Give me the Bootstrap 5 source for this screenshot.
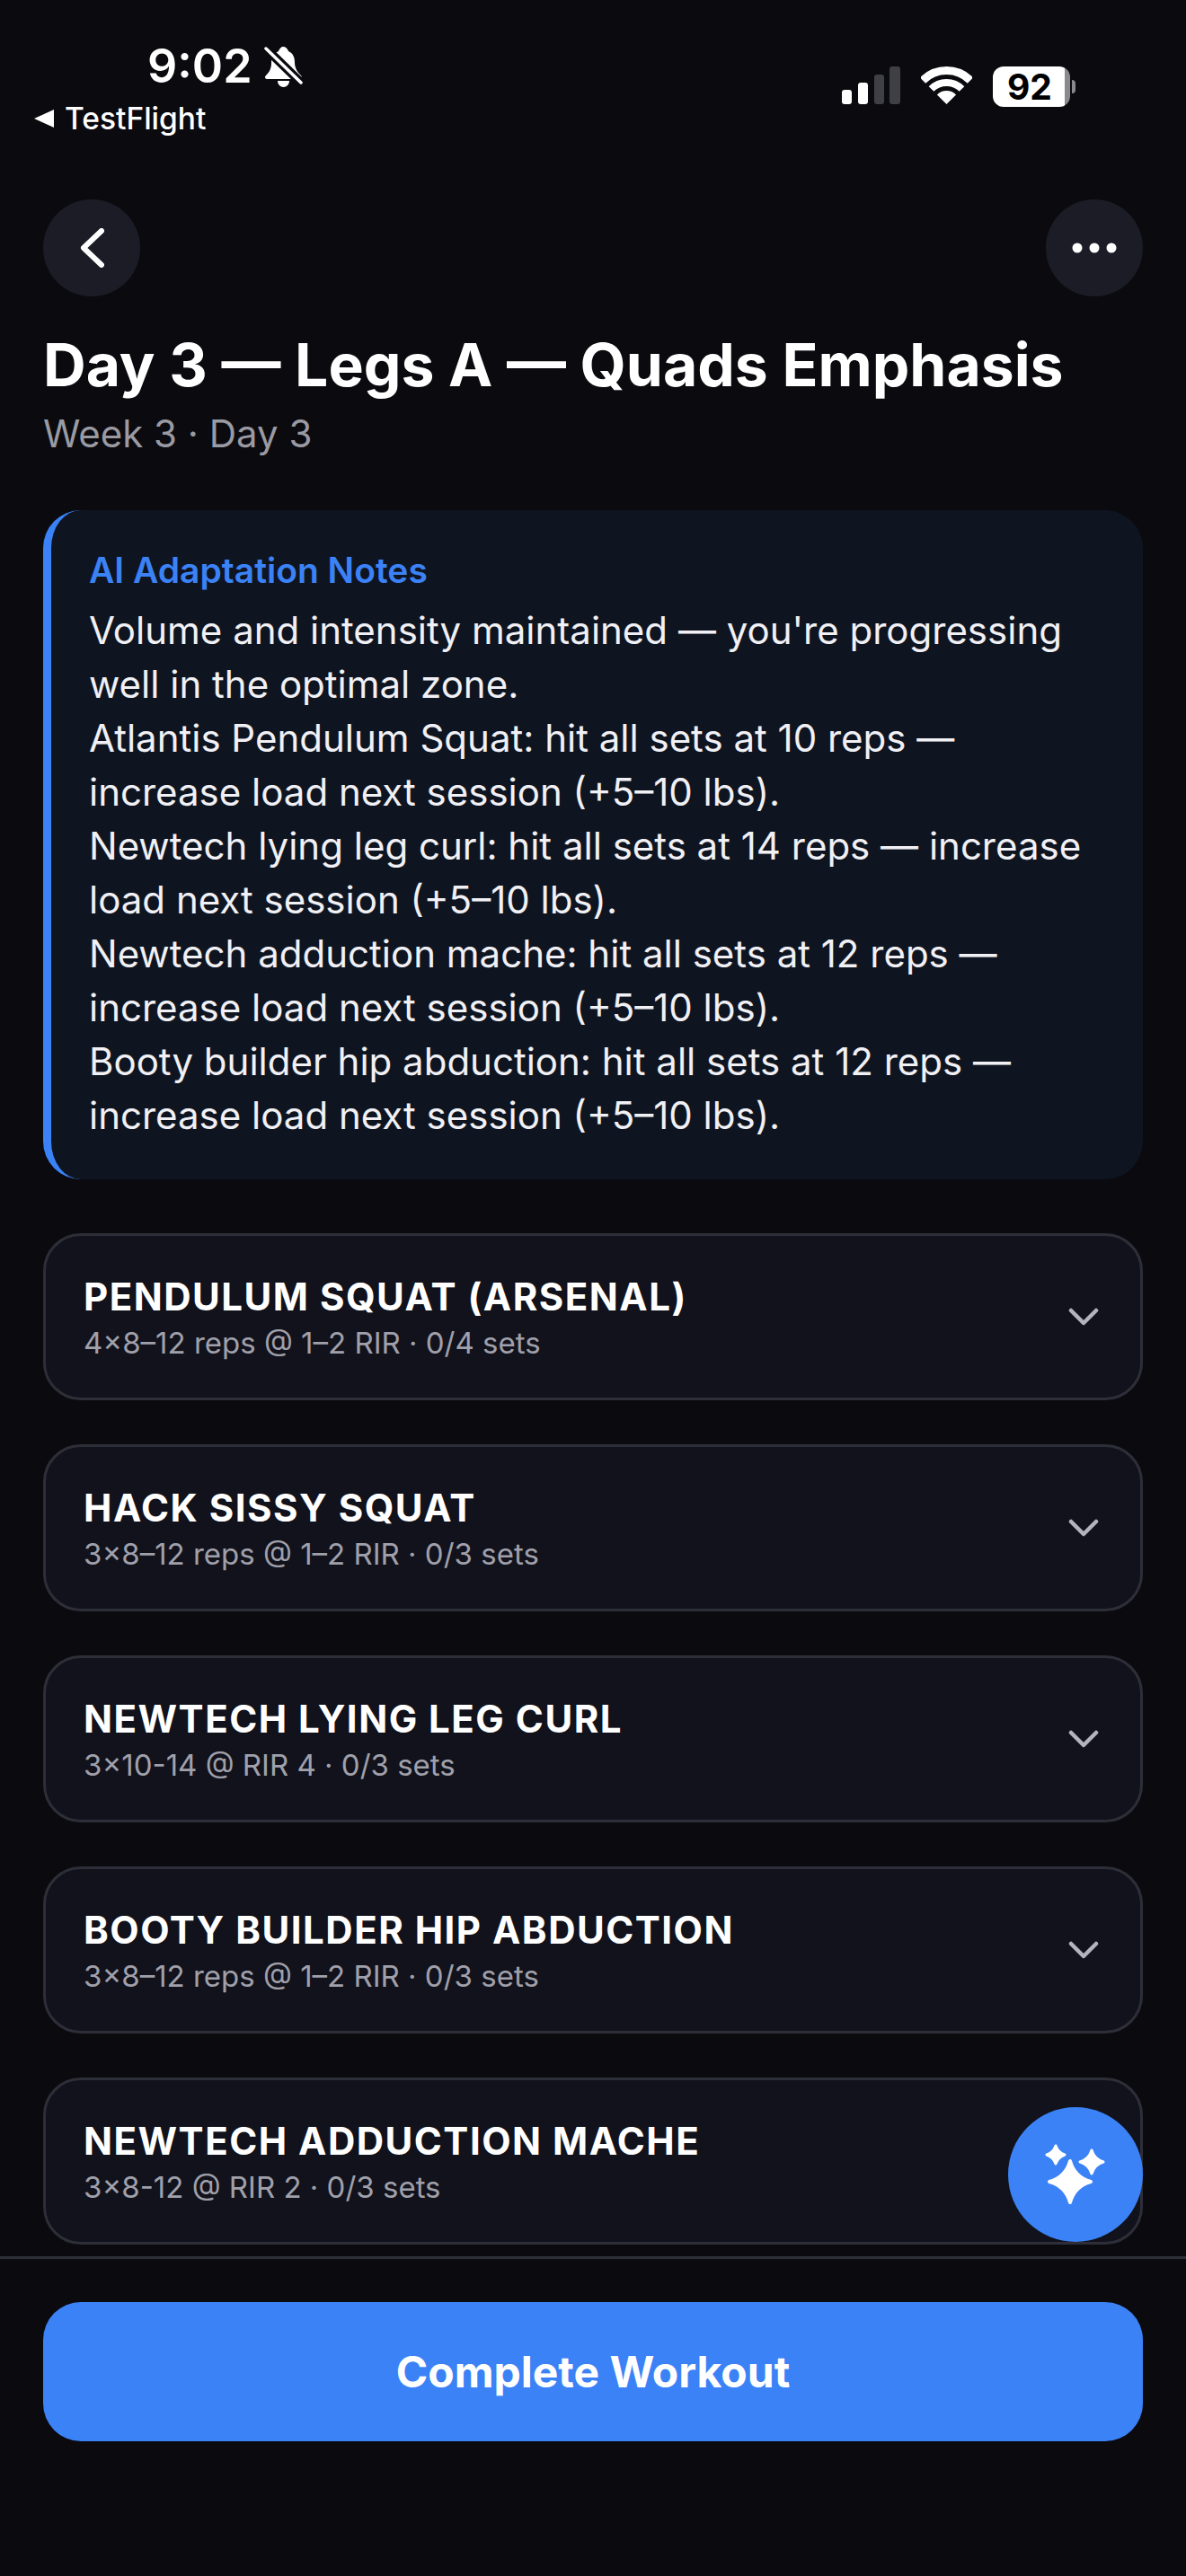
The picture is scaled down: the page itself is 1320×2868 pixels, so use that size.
<!DOCTYPE html>
<html lang="en">
<head>
    <meta charset="UTF-8">
    <meta name="viewport" content="width=device-width, initial-scale=1.0">
    <title>Day 3</title>
    <link href="https://cdn.jsdelivr.net/npm/bootstrap@5.3.0/dist/css/bootstrap.min.css" rel="stylesheet">
    <style>
        body {
            font-family: Inter, "Liberation Sans", sans-serif;
            background-color: #0a0a0f;
            color: #fff;
            overflow: hidden;
        }

        .screen {
            position: relative;
            width: 1320px;
            height: 2868px;
            overflow: hidden;
        }

        .status-area {
            height: 222px;
            padding: 48px 123px 0 38px;
        }

        .clock-line {
            padding-left: 126px;
            height: 52px;
            gap: 13px;
        }

        .clock {
            font-size: 52px;
            font-weight: 600;
            line-height: 52px;
        }

        .back-app {
            font-size: 33.5px;
            line-height: 40px;
            margin-top: 12px;
            font-weight: 500;
        }

        .status-right {
            padding-top: 26px;
            gap: 23px;
        }

        .batt-num {
            width: 86px;
            height: 45px;
            background: linear-gradient(90deg, #fff 93%, #8a8a8e 93%);
            border-radius: 12px;
            color: #000;
            font-size: 39px;
            font-weight: 700;
            line-height: 45px;
            text-align: center;
            padding-right: 4px;
        }

        .batt-nub {
            width: 4px;
            height: 15px;
            margin-left: 2px;
            background: #8a8a8e;
            border-radius: 0 6px 6px 0;
        }

        .round-btn {
            width: 108px;
            height: 108px;
            border: 0;
            padding: 0;
            border-radius: 50%;
            background: #1c1c26;
        }

        .top-nav {
            padding: 0 48px;
        }

        .head-block {
            padding: 31px 48px 0;
        }

        .page-title {
            font-size: 66px;
            font-weight: 700;
            line-height: 90px;
            margin: 0;
        }

        .page-sub {
            font-size: 42px;
            line-height: 60px;
            color: #9a9aa2;
            margin: 2px 0 0;
        }

        .note-box {
            margin: 55px 48px 0;
            padding: 40px 42px 42px;
            height: 745px;
            background: #0f1520;
            border-left: 9px solid #3b82f6;
            border-radius: 42px;
        }

        .note-title {
            font-size: 39px;
            font-weight: 600;
            line-height: 54px;
            color: #3b82f6;
            margin-bottom: 10px;
        }

        .note-text {
            font-size: 42px;
            line-height: 60px;
            color: #f0f0f5;
            margin: 0;
        }

        .ex-list {
            padding: 60px 48px 0;
            gap: 49px;
        }

        .ex-item {
            height: 186px;
            flex: none;
            padding: 0 42px;
            background: #11121b;
            border: 3px solid #2e2e38;
            border-radius: 42px;
        }

        .ex-name {
            font-size: 42px;
            font-weight: 700;
            letter-spacing: 1.5px;
            line-height: 54px;
            color: #fff;
        }

        .ex-meta {
            font-size: 33px;
            line-height: 42px;
            margin-top: 3px;
            color: #a0a0ab;
        }

        .foot-bar {
            position: absolute;
            left: 0;
            right: 0;
            top: 2512px;
            padding: 48px 48px 0;
            border-top: 3px solid #2e2e38;
        }

        .done-btn {
            height: 155px;
            background: #3b82f6;
            border: 0;
            border-radius: 42px;
            color: #fff;
            font-size: 48px;
            font-weight: 700;
        }

        .fab-btn {
            position: absolute;
            left: 1122px;
            top: 2346px;
            width: 150px;
            height: 150px;
            border: 0;
            border-radius: 50%;
            background: #3b82f6;
            padding: 0;
        }
    </style>
</head>
<body>
    <div class="screen">
        <div class="status-area d-flex justify-content-between">
            <div>
                <div class="clock-line d-flex align-items-center">
                    <span class="clock">9:02</span>
                    <svg width="44" height="46" viewBox="0 0 44 46">
                        <path d="M21 1c3 0 5 2 6 5 5 2 7 7 7 12 0 6 2 10 7 15 2 3 0 4-2 4H4c-3 0-4-2-2-4 4-4 6-8 6-14 0-6 3-11 8-13 1-3 3-5 5-5z" fill="#fff"/>
                        <path d="M15 39h13c0 4-3 7-6.500 7S15 43 15 39z" fill="#fff"/>
                        <path d="M2 3l39 38" stroke="#0a0a0f" stroke-width="10"/>
                        <path d="M2 3l39 38" stroke="#fff" stroke-width="3.500" stroke-linecap="round"/>
                    </svg>
                </div>
                <div class="back-app d-flex align-items-center gap-2">
                    <svg width="22" height="20" viewBox="0 0 22 20"><path d="M22 0v20L0 10z" fill="#fff"/></svg>
                    <span class="ms-1">TestFlight</span>
                </div>
            </div>
            <div class="status-right d-flex align-items-start">
                <svg width="65" height="42" viewBox="0 0 65 42">
                    <rect x="0" y="26" width="11" height="16" rx="3" fill="#fff"/>
                    <rect x="18" y="18" width="11" height="24" rx="3" fill="#fff"/>
                    <rect x="36" y="9" width="11" height="33" rx="3" fill="#3f3f46"/>
                    <rect x="53" y="0" width="12" height="42" rx="3" fill="#3f3f46"/>
                </svg>
                <svg width="57" height="43" viewBox="0 0 57 43">
                    <path d="M28.500 42 17.900 31.400a15 15 0 0 1 21.200 0z" fill="#fff"/>
                    <path d="M11.500 25a24 24 0 0 1 34 0" fill="none" stroke="#fff" stroke-width="8"/>
                    <path d="M2 15.500a37.500 37.500 0 0 1 53 0" fill="none" stroke="#fff" stroke-width="9"/>
                </svg>
                <div class="d-flex align-items-center">
                    <div class="batt-num">92</div>
                    <div class="batt-nub"></div>
                </div>
            </div>
        </div>

        <div class="top-nav d-flex justify-content-between">
            <button class="round-btn d-flex align-items-center justify-content-center">
                <svg width="28" height="44" viewBox="0 0 28 44"><path d="M25 3 5 22l20 19" fill="none" stroke="#fff" stroke-width="6" stroke-linecap="round" stroke-linejoin="round"/></svg>
            </button>
            <button class="round-btn d-flex align-items-center justify-content-center">
                <svg width="50" height="12" viewBox="0 0 50 12"><circle cx="6" cy="6" r="5.500" fill="#fff"/><circle cx="25" cy="6" r="5.500" fill="#fff"/><circle cx="44" cy="6" r="5.500" fill="#fff"/></svg>
            </button>
        </div>

        <div class="head-block">
            <h1 class="page-title">Day 3 — Legs A — Quads Emphasis</h1>
            <p class="page-sub">Week 3 · Day 3</p>
        </div>

        <div class="note-box">
            <div class="note-title">AI Adaptation Notes</div>
            <p class="note-text">Volume and intensity maintained — you're progressing<br>well in the optimal zone.<br>Atlantis Pendulum Squat: hit all sets at 10 reps —<br>increase load next session (+5–10 lbs).<br>Newtech lying leg curl: hit all sets at 14 reps — increase<br>load next session (+5–10 lbs).<br>Newtech adduction mache: hit all sets at 12 reps —<br>increase load next session (+5–10 lbs).<br>Booty builder hip abduction: hit all sets at 12 reps —<br>increase load next session (+5–10 lbs).</p>
        </div>

        <div class="ex-list d-flex flex-column" id="exercises"></div>

        <div class="foot-bar">
            <button class="done-btn w-100">Complete Workout</button>
        </div>

        <button class="fab-btn d-flex align-items-center justify-content-center">
            <svg width="150" height="150" viewBox="0 0 150 150" fill="#fff" stroke="#fff" stroke-linejoin="round">
                <path d="M69 60Q74 78 92 83 74 88 69 106 64 88 46 83 64 78 69 60z" stroke-width="4"/>
                <path d="M53 43Q55.500 50.500 63 53 55.500 55.500 53 63 50.500 55.500 43 53 50.500 50.500 53 43z" stroke-width="3"/>
                <path d="M93 48Q96 58 106 61 96 64 93 74 90 64 80 61 90 58 93 48z" stroke-width="3"/>
            </svg>
        </button>
    </div>

    <script src="https://cdn.jsdelivr.net/npm/bootstrap@5.3.0/dist/js/bootstrap.bundle.min.js"></script>
    <script>
        const exercises = [
            ["PENDULUM SQUAT (ARSENAL)", "4×8–12 reps @ 1–2 RIR · 0/4 sets"],
            ["HACK SISSY SQUAT", "3×8–12 reps @ 1–2 RIR · 0/3 sets"],
            ["NEWTECH LYING LEG CURL", "3×10-14 @ RIR 4 · 0/3 sets"],
            ["BOOTY BUILDER HIP ABDUCTION", "3×8–12 reps @ 1–2 RIR · 0/3 sets"],
            ["NEWTECH ADDUCTION MACHE", "3×8-12 @ RIR 2 · 0/3 sets"]
        ];
        document.getElementById('exercises').innerHTML = exercises.map(ex => `
            <div class="ex-item d-flex align-items-center justify-content-between">
                <div>
                    <div class="ex-name">${ex[0]}</div>
                    <div class="ex-meta">${ex[1]}</div>
                </div>
                <svg class="me-1" width="34" height="20" viewBox="0 0 34 20"><path d="M3 3l14 14L31 3" fill="none" stroke="#b4b4be" stroke-width="4.500" stroke-linecap="round" stroke-linejoin="round"/></svg>
            </div>
        `).join('');
    </script>
</body>
</html>
